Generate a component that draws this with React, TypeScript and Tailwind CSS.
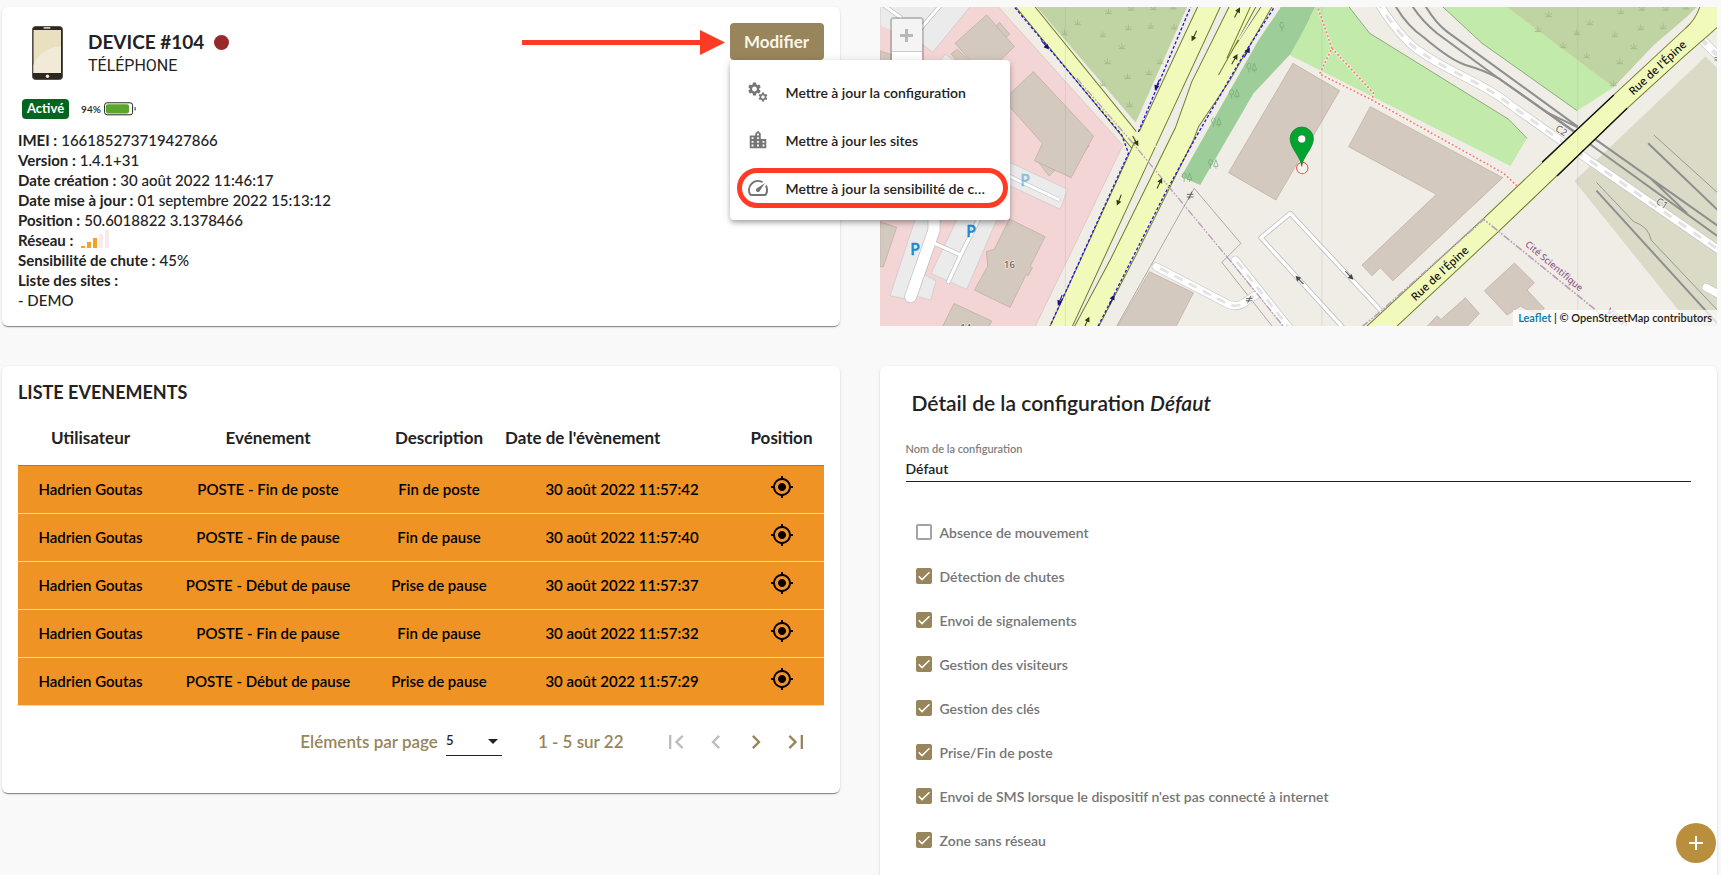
import type { ReactNode } from 'react';
import {
  MdAdd,
  MdChevronLeft,
  MdChevronRight,
  MdFirstPage,
  MdLastPage,
  MdLocationCity,
  MdMyLocation,
  MdSettings,
  MdSpeed,
} from 'react-icons/md';

const events = [
  { user: 'Hadrien Goutas', type: 'POSTE - Fin de poste', description: 'Fin de poste', date: '30 août 2022 11:57:42' },
  { user: 'Hadrien Goutas', type: 'POSTE - Fin de pause', description: 'Fin de pause', date: '30 août 2022 11:57:40' },
  { user: 'Hadrien Goutas', type: 'POSTE - Début de pause', description: 'Prise de pause', date: '30 août 2022 11:57:37' },
  { user: 'Hadrien Goutas', type: 'POSTE - Fin de pause', description: 'Fin de pause', date: '30 août 2022 11:57:32' },
  { user: 'Hadrien Goutas', type: 'POSTE - Début de pause', description: 'Prise de pause', date: '30 août 2022 11:57:29' },
];

const options = [
  { label: 'Absence de mouvement', on: false },
  { label: 'Détection de chutes', on: true },
  { label: 'Envoi de signalements', on: true },
  { label: 'Gestion des visiteurs', on: true },
  { label: 'Gestion des clés', on: true },
  { label: 'Prise/Fin de poste', on: true },
  { label: "Envoi de SMS lorsque le dispositif n'est pas connecté à internet", on: true },
  { label: 'Zone sans réseau', on: true },
];

const cardShadow =
  'shadow-[0_2px_1px_-1px_rgba(0,0,0,0.3),0_1px_1px_rgba(0,0,0,0.16),0_1px_3px_rgba(0,0,0,0.12)]';

function PhoneIcon() {
  return (
    <svg width="31" height="54" viewBox="0 0 31 54" aria-hidden="true">
      <rect x="0.5" y="0.5" width="30" height="53" rx="3" fill="#2d2724" stroke="#55504c" />
      <rect x="1.5" y="4" width="27.5" height="43" fill="#eadfbf" />
      <path d="M29 20.5C18 20.500 5 28 1.500 39V47H29Z" fill="#f1ead6" />
      <rect x="11.500" y="1" width="7" height="1.800" rx="0.900" fill="#cfc6b0" />
      <circle cx="15.500" cy="50.300" r="1.700" fill="#f4ecd8" />
    </svg>
  );
}

function BatteryIcon() {
  return (
    <svg width="32" height="14" viewBox="0 0 32 14" aria-hidden="true">
      <rect x="0.600" y="0.800" width="28" height="12" rx="2.500" fill="#fff" stroke="#222" strokeWidth="1" />
      <rect x="2" y="2.200" width="23" height="9.200" rx="1.800" fill="#5ca52b" />
      <rect x="30.600" y="5.200" width="1" height="3.200" fill="#222" />
    </svg>
  );
}

function SignalIcon() {
  return (
    <svg className="inline-block align-baseline" width="28" height="18" viewBox="0 0 28 18" aria-hidden="true">
      <rect x="0" y="16" width="4" height="2" fill="#f9a02a" />
      <rect x="6" y="12" width="4" height="6" fill="#f9a02a" />
      <rect x="12" y="8" width="4" height="10" fill="#f9a02a" />
      <rect x="18" y="4" width="4" height="14" fill="#f7eaea" />
      <rect x="24" y="0" width="4" height="18" fill="#f7eaea" />
    </svg>
  );
}

function CogsIcon() {
  return (
    <svg width="24" height="24" viewBox="0 0 24 24" aria-hidden="true">
      <MdSettings x="0.500" y="1" size={16} />
      <MdSettings x="11.500" y="11.500" size={11} />
    </svg>
  );
}

function Tuft({ x, y }: { x: number; y: number }) {
  return (
    <path
      d={`M${x - 10} ${y + 7}h20M${x} ${y + 6}v-14M${x - 2} ${y + 6}l-7-9M${x + 2} ${y + 6}l7-9`}
      stroke="#9db37f"
      strokeWidth="2"
      fill="none"
    />
  );
}

function Tree({ x, y }: { x: number; y: number }) {
  return (
    <g stroke="#6fa873" strokeWidth="2" fill="none">
      <ellipse cx={x - 7} cy={y - 5} rx="6" ry="8" />
      <path d={`M${x - 7} ${y + 3}v11M${x + 9} ${y - 13}l-7 20h14ZM${x + 9} ${y + 7}v7`} />
    </g>
  );
}

function Arrow({ x, y, r, c }: { x: number; y: number; r: number; c: string }) {
  return (
    <g transform={`translate(${x} ${y}) rotate(${r})`}>
      <path d="M-17 0H5" stroke={c} strokeWidth="3" />
      <path d="M18 0L2-8V8Z" fill={c} />
    </g>
  );
}

function WhiteRoad({ d, w }: { d: string; w: number }) {
  return (
    <g fill="none" strokeLinecap="round" strokeLinejoin="round">
      <path d={d} stroke="#c6c6c6" strokeWidth={w + 4} />
      <path d={d} stroke="#fff" strokeWidth={w} />
    </g>
  );
}

const tuftsLeft = [
  [715, 34], [783, 24], [850, 22], [910, 20], [622, 67], [583, 97], [698, 103], [775, 82], [842, 78], [912, 80],
  [755, 139], [712, 184], [870, 184], [772, 229], [836, 217], [697, 250], [778, 313],
];
const tuftsRight = [
  [775, 43], [991, 34], [1055, 24], [1126, 24], [1186, 20], [898, 67], [743, 88], [859, 97], [973, 103], [1051, 82],
  [1118, 79], [818, 136], [1030, 139], [889, 166], [988, 184], [969, 250],
];

function MapDrawing() {
  const building = { fill: '#d4c9bf', stroke: '#bda9a0', strokeWidth: 2 };
  const parking = { fill: '#ebebeb', stroke: '#cfc4c4', strokeWidth: 2 };
  const road = { fill: '#f1f9bb', stroke: '#71802a', strokeWidth: 3 };
  return (
    <svg
      className="block h-[319px] w-full"
      viewBox="2640 21 2511 957"
      preserveAspectRatio="xMidYMid slice"
      fontFamily="'Noto Sans', sans-serif"
      role="img"
      aria-label="Position"
    >
      <rect x="2000" y="0" width="4000" height="1100" fill="#f0ede6" />

      <g transform="translate(2610 0)">
        <path d="M-600 0H366L758 436L490 990H-600Z" fill="#f3d5d5" stroke="#d8bcbc" strokeWidth="2" />
        <path d="M30 0H317L188 157L150 128L30 80Z" {...parking} />
        <path d="M30 75L130 128L70 190H30Z" fill="#f3d5d5" />
        <path d="M225 163L245 176V190H205Z" {...parking} />
        <path d="M30 8L95 55M215 12L150 88" stroke="#bbb" strokeWidth="13" />
        <path d="M30 8L95 55M215 12L150 88" stroke="#fff" strokeWidth="9" />
        <path d="M30 153L68 165V190H30Z" {...building} />
        <path d="M388 67L419 103L408 112L375 82Z" {...building} />
        <path d="M262 148L243 162L262 185H300Z" {...building} />
        <path d="M350 45L433 140L388 184H303L255 130Z" {...building} />
        <path d="M638 440L650 430L657 437L645 452Z" {...building} />
        <path d="M505 487L537 528L555 510Z" {...building} />
        <path d="M490 215L670 408L603 533L493 482L517 430L400 300Z" {...building} />
        <path d="M400 478L593 568L570 628L400 548Z" {...parking} />
        <WhiteRoad d="M400 520L565 598" w={9} />
        <path d="M30 665L80 682L40 800H30Z" {...building} />
        <path d="M138 650H215L165 825L198 842L182 900L145 890L122 900L60 887Z" {...parking} />
        <path d="M265 650H384L290 868L183 820Z" {...parking} />
        <g fill="none" strokeLinejoin="round" strokeLinecap="round">
          <path d="M192 640V690L122 890M190 728L272 765M235 845L272 765L325 660" stroke="#bdbdbd" strokeWidth="14" />
          <path d="M192 640V690L122 890" stroke="#bdbdbd" strokeWidth="38" />
          <path d="M192 640V690L122 890" stroke="#fff" strokeWidth="34" />
          <path d="M190 728L272 765M235 845L272 765L325 660" stroke="#fff" strokeWidth="10" />
        </g>
        <path d="M418 657L525 710L480 800L487 803L475 826L468 824L420 922L313 870L353 798L349 755L373 747Z" {...building} />
        <path d="M252 910L365 963L350 990H212Z" {...building} />

        <path d="M482 0H960L797 367L790 360Z" fill="#bfd3a3" />
        {tuftsLeft.map(([x, y]) => (
          <Tuft key={`${x}-${y}`} x={x} y={y} />
        ))}
        <path d="M420 0H478L803 400L785 445Z" {...road} />
        <path d="M992 0L805 400L785 445L530 1000H597L835 485L1060 0Z" {...road} />
        <path d="M1087 0L965 245L915 385L720 780L602 1000H675L800 760L970 420L985 380L1078 243L1217 0Z" {...road} />
        <path d="M800 385L860 440L790 445Z" fill="#f1f9bb" />
        <path d="M1150 0L1075 165L1045 225L1095 143L1186 0Z" fill="#f1f9bb" />
        <path d="M1150 0L1070 175M1186 0L1090 145L1045 225M1168 0L1085 155" stroke="#71802a" strokeWidth="3" fill="none" />
        <path d="M1173 10L1105 120" stroke="#eee" strokeWidth="5" />
        <g fill="none" stroke="#2616dd" strokeWidth="4" strokeDasharray="9 6">
          <path d="M415 0L755 405L775 460L532 995" />
          <path d="M970 0L803 400" />
          <path d="M1226 0L1120 165L975 415L885 580L678 990" />
        </g>
        <path d="M1247 0H1320V110L1258 165L1150 280L990 555L933 530L1165 120Z" fill="#9dcd98" />
        {[[1242, 80], [1143, 203], [1091, 282], [1037, 367], [1028, 492], [949, 532]].map(([x, y]) => (
          <Tree key={x} x={x} y={y} />
        ))}
        <path d="M620 235L780 420L1070 770" fill="none" stroke="#b99fb9" strokeWidth="4" strokeDasharray="22 5 5 5 5 5" />
        <path d="M972 565L1112 730L1055 787L1215 990M972 565L740 978" fill="none" stroke="#8a8a8a" strokeWidth="2" />
        <path d="M838 815L970 878L912 990H736Z" {...building} />
        <g fill="none" strokeLinecap="round" strokeLinejoin="round">
          <path d="M858 800L1060 905Q1090 925 1115 912L1160 882M1095 780L1270 1000" stroke="#c6c6c6" strokeWidth="26" />
          <path d="M858 800L1060 905Q1090 925 1115 912L1160 882M1095 780L1270 1000" stroke="#fff" strokeWidth="22" />
        </g>
        <path d="M870 805L1060 905Q1090 925 1115 912L1160 882M1100 785L1270 1000" fill="none" stroke="#e3e3e3" strokeWidth="8" strokeDasharray="28 20" />
        <path d="M1070 770L1245 985" fill="none" stroke="#b99fb9" strokeWidth="4" strokeDasharray="22 5 5 5 5 5" />
        <path d="M950 583H970M950 591H970M965 575L955 599M1127 895H1147M1127 902H1147M1142 887L1132 910" stroke="#333" strokeWidth="2" />

        <Arrow x={972} y={108} r={115} c="#353a10" />
        <Arrow x={1101} y={38} r={-62} c="#353a10" />
        <Arrow x={1093} y={178} r={-60} c="#353a10" />
        <Arrow x={796} y={423} r={60} c="#353a10" />
        <Arrow x={868} y={550} r={-65} c="#353a10" />
        <Arrow x={747} y={600} r={112} c="#353a10" />
        <Arrow x={650} y={966} r={-65} c="#353a10" />
        <Arrow x={525} y={135} r={50} c="#190f83" />
        <Arrow x={861} y={255} r={112} c="#190f83" />
        <Arrow x={1130} y={158} r={-60} c="#190f83" />
        <Arrow x={570} y={900} r={112} c="#190f83" />
        <Arrow x={725} y={900} r={-65} c="#190f83" />
        <g fill="#168bd2" stroke="#168bd2" strokeWidth="1.5" fontSize="48" textAnchor="middle">
          <text x="135" y="764">P</text>
          <text x="303" y="712">P</text>
          <text x="465" y="557" opacity="0.45">P</text>
        </g>
        <g fill="#666" fontSize="28" textAnchor="middle" stroke="#e9e1da" strokeWidth="5" paintOrder="stroke">
          <text x="418" y="804">16</text>
          <text x="287" y="993">14</text>
        </g>
        <path d="M586 0V1000" stroke="#999" strokeOpacity="0.2" strokeWidth="3" />
      </g>

      <g transform="translate(3870 0)">
        <path d="M-2 165L30 110L86 0H160L238 100L655 358L710 415L660 498Z" fill="#c2ebab" />
        <path d="M160 0L238 100L655 358L710 415" fill="none" stroke="#6d8a62" strokeWidth="2" />
        <path d="M-30 21H75L-2 165Z" fill="#9dcd98" />
        <path d="M435 0H655L970 262L860 332L575 130Z" fill="#c2ebab" />
        <path d="M435 0L575 130L860 332" fill="none" stroke="#6d8a62" strokeWidth="2" />
        <path d="M622 0H1240L1190 50L1090 135L970 262Z" fill="#bfd3a3" />
        {tuftsRight.map(([x, y]) => (
          <Tuft key={`${x}-${y}`} x={x} y={y} />
        ))}
        <path d="M852 543L1245 170L1281 205L1700 600V1000H1220Z" fill="#dadac7" />

        <g fill="none" stroke="#8f8f8f" strokeWidth="6">
          <path d="M305 0Q345 75 400 112Q480 180 525 195Q580 210 625 235L860 400" />
          <path d="M355 0Q385 55 440 100L620 232L850 395" />
          <path d="M395 0Q430 65 470 95L862 380M765 335L862 382" />
          <path d="M915 418L1300 690M898 432L1300 722M1080 535L1190 640" />
          <path d="M1073 430L1300 648M918 572L1290 980" />
        </g>
        <path d="M1090 405L1300 595M918 547L1030 665Q1075 680 1082 720L1290 940" fill="none" stroke="#777" strokeWidth="2" />
        <WhiteRoad d="M258 0Q320 100 375 145Q430 185 520 230Q620 280 660 315L820 428L1300 760" w={22} />
        <path d="M258 0Q320 100 375 145Q430 185 520 230Q620 280 660 315L820 428L1300 760" fill="none" stroke="#e3e3e3" strokeWidth="9" strokeDasharray="28 26" />
        <WhiteRoad d="M1235 120L1300 185" w={24} />
        <path d="M1235 120L1300 185" stroke="#e3e3e3" strokeWidth="14" strokeDasharray="20 24" />
        <WhiteRoad d="M1247 862L1300 890" w={22} />
        <path d="M1272 173H1290M1272 180H1290" stroke="#333" strokeWidth="2" />

        <path d="M8 190L148 272L-43 600L-185 518Z" {...building} />
        <path d="M240 320L637 533L308 842L270 803L245 827L215 795L438 583L175 440Z" {...building} />
        <path d="M672 789L732 848L710 870L762 925L740 945L690 918L650 945L582 872Z" {...building} />
        <path d="M525 893L567 940L520 990H400L440 947L452 958Z" {...building} />
        <g fill="none" strokeLinejoin="round">
          <path d="M165 990L-88 713L0 640L275 935" stroke="#bfbfbf" strokeWidth="15" />
          <path d="M165 990L-88 713L0 640L275 935" stroke="#fff" strokeWidth="10" />
        </g>
        <Arrow x={28} y={840} r={227} c="#444" />
        <Arrow x={177} y={826} r={47} c="#444" />

        <path
          d="M1238 0L1228 21Q1215 60 1185 85L970 285L580 655L230 978L215 995H302L640 680L1010 325L1180 170L1300 65V0Z"
          {...road}
        />
        <path d="M755 487L970 285M800 528L1010 325" stroke="#111" strokeWidth="4" />
        <path d="M215 980L270 935L580 658L910 925L980 990" fill="none" stroke="#b99fb9" strokeWidth="5" strokeDasharray="22 5 5 5 5 5" />
        <g fill="none" stroke="#fff" strokeOpacity="0.5" strokeWidth="8">
          <path d="M85 30L125 145L88 222L245 300L640 520L680 558M125 145L250 280L245 300" />
        </g>
        <path
          d="M80 15L125 145L88 222L245 300L640 520L680 558M125 145L250 280L245 300"
          fill="none"
          stroke="#fa8072"
          strokeWidth="5"
          strokeDasharray="6 6"
        />
        <g textAnchor="middle" fontSize="33">
          <text transform="translate(1109 212) rotate(-43)" fill="#111">Rue de l'Épine</text>
          <text transform="translate(456 829) rotate(-43)" fill="#111">Rue de l'Épine</text>
          <g fontSize="28" fill="#8d618b" stroke="#f3efec" strokeWidth="4" paintOrder="stroke">
            <text transform="translate(785 805) rotate(40)">Cité Scientifique</text>
            <text transform="translate(975 960) rotate(40)">Villen</text>
          </g>
          <g fontSize="29" fill="#777" stroke="#f5f5f2" strokeWidth="4" paintOrder="stroke">
            <text transform="translate(807 400) rotate(34)">C2</text>
            <text transform="translate(1109 618) rotate(34)">C1</text>
          </g>
        </g>
        <path d="M95 0V1000M862 0V1000" stroke="#999" strokeOpacity="0.2" strokeWidth="3" />
        <circle cx="36" cy="504" r="17" fill="#fff" fillOpacity="0.3" stroke="#f04848" strokeWidth="3" />
        <path
          d="M34.500 499C32 470 -0.500 445 -0.500 416A35 35 0 0 1 69.500 416C69.500 445 37 470 34.500 499Z"
          fill="#02a32f"
          stroke="#04832a"
          strokeWidth="2"
        />
        <circle cx="34.500" cy="417" r="12" fill="#fff" stroke="#04832a" strokeWidth="2" />
      </g>
    </svg>
  );
}

function MenuItem({ icon, children, highlighted }: { icon: ReactNode; children: ReactNode; highlighted?: boolean }) {
  return (
    <li role="none" className="relative">
      <button type="button" role="menuitem" className="flex h-12 w-full items-center gap-4 pr-5 pl-4 text-left">
        <span className="flex w-6 shrink-0 justify-center text-[#757575]">{icon}</span>
        <span className="truncate">{children}</span>
      </button>
      {highlighted && (
        <span className="pointer-events-none absolute inset-y-1 right-0.5 left-[7px] rounded-full border-[5px] border-[#ff3b25]" />
      )}
    </li>
  );
}

function Info({ label, children }: { label: string; children?: ReactNode }) {
  return (
    <div className="flex gap-1">
      <dt className="font-bold">{label} :</dt>
      <dd>{children}</dd>
    </div>
  );
}

function DeviceCard() {
  return (
    <section className={`rounded-md bg-white p-4 ${cardShadow}`}>
      <div className="flex items-start justify-between">
        <div className="flex h-[68px] gap-[25px] pt-[3px] pl-3.5">
          <PhoneIcon />
          <div className="pt-1">
            <h1 className="flex items-center gap-2.5 text-[19px] leading-6 font-bold">
              DEVICE #104 <span className="size-[15px] rounded-full bg-[#97282b]" />
            </h1>
            <p className="font-[Roboto,sans-serif] text-base leading-6 font-normal">TÉLÉPHONE</p>
          </div>
        </div>
        <div className="relative z-10">
          <svg
            className="pointer-events-none absolute top-[7px] right-full mr-[5px]"
            width="203"
            height="25"
            viewBox="0 0 203 25"
            aria-hidden="true"
          >
            <path d="M0 10H178V0L203 12.500L178 25V15H0Z" fill="#ff3b25" />
          </svg>
          <button
            type="button"
            aria-haspopup="menu"
            aria-expanded="true"
            className="block h-[37px] w-[94px] rounded bg-[#98855b] text-center text-[17px] font-bold text-[#faf6ea]"
          >
            Modifier
          </button>
          <ul
            role="menu"
            className="absolute top-full left-0 w-[280px] rounded bg-white py-2 text-[14px] font-semibold shadow-[0_2px_4px_-1px_rgba(0,0,0,0.2),0_4px_5px_rgba(0,0,0,0.14),0_1px_10px_rgba(0,0,0,0.12)]"
          >
            <MenuItem icon={<CogsIcon />}>Mettre à jour la configuration</MenuItem>
            <MenuItem icon={<MdLocationCity size={22} />}>Mettre à jour les sites</MenuItem>
            <MenuItem icon={<MdSpeed size={24} />} highlighted>
              Mettre à jour la sensibilité de chute
            </MenuItem>
          </ul>
        </div>
      </div>
      <div className="flex h-[39px] items-start gap-3 pl-1">
        <span className="mt-2 flex h-5 items-center rounded bg-[#04651f] px-[5px] text-[13px] font-bold text-white">Activé</span>
        <span className="mt-2 flex h-5 items-center gap-[3px] text-[10px] font-semibold">
          94%
          <BatteryIcon />
        </span>
      </div>
      <dl className="text-[15px] leading-5">
        <Info label="IMEI">166185273719427866</Info>
        <Info label="Version">1.4.1+31</Info>
        <Info label="Date création">30 août 2022 11:46:17</Info>
        <Info label="Date mise à jour">01 septembre 2022 15:13:12</Info>
        <Info label="Position">50.6018822 3.1378466</Info>
        <div className="flex h-5 items-end gap-2">
          <dt className="font-bold">Réseau :</dt>
          <dd className="flex h-5">
            <SignalIcon />
          </dd>
        </div>
        <Info label="Sensibilité de chute">45%</Info>
        <Info label="Liste des sites" />
        <div>- DEMO</div>
      </dl>
    </section>
  );
}

function MapCard() {
  return (
    <section className="relative overflow-hidden">
      <MapDrawing />
      <div className="absolute top-2.5 left-2.5 overflow-hidden rounded border-2 border-black/20">
        <button
          type="button"
          aria-label="Zoom avant"
          className="flex h-[33px] w-[30px] items-center justify-center border-b border-[#ccc] bg-[#f4f4f4]"
        >
          <svg width="13" height="13" viewBox="0 0 13 13" aria-hidden="true">
            <path d="M6.500 0V13M0 6.500H13" stroke="#b8b8b8" strokeWidth="3" />
          </svg>
        </button>
        <button type="button" aria-label="Zoom arrière" className="block h-[30px] w-[30px] bg-white" />
      </div>
      <p className="absolute right-0 bottom-0 bg-white/70 px-[5px] text-[11px] leading-4 font-semibold">
        <a href="#leaflet" className="text-[#0078a8]">
          Leaflet
        </a>{' '}
        | © OpenStreetMap contributors
      </p>
    </section>
  );
}

function EventsCard() {
  const pager = 'flex size-10 items-center justify-center';
  return (
    <section className={`self-start rounded-md bg-white px-4 pt-4 pb-[15px] ${cardShadow}`}>
      <h2 className="mb-2 text-[18px] leading-5 font-bold">LISTE EVENEMENTS</h2>
      <table className="w-full table-fixed border-collapse text-center text-[15px] font-semibold">
        <colgroup>
          <col className="w-[145px]" />
          <col className="w-[210px]" />
          <col className="w-[132px]" />
          <col className="w-[234px]" />
          <col className="w-[85px]" />
        </colgroup>
        <thead>
          <tr className="h-[55px] border-b border-[#85836f] text-[17px]">
            <th className="font-bold">Utilisateur</th>
            <th className="font-bold">Evénement</th>
            <th className="font-bold">Description</th>
            <th className="text-left font-bold">Date de l'évènement</th>
            <th className="font-bold">Position</th>
          </tr>
        </thead>
        <tbody>
          {events.map((event) => (
            <tr key={event.date} className="h-12 border-b border-[#e3d9c8] bg-[#ef9325] text-black">
              <td>{event.user}</td>
              <td>{event.type}</td>
              <td>{event.description}</td>
              <td>{event.date}</td>
              <td>
                <button type="button" aria-label="Localiser" className="mb-1 block w-full">
                  <MdMyLocation size={24} className="mx-auto" />
                </button>
              </td>
            </tr>
          ))}
        </tbody>
      </table>
      <div className="flex h-[72px] items-center justify-end pr-2 text-[17px] font-semibold text-[#98855b]">
        <label htmlFor="page-size" className="mr-2">
          Eléments par page
        </label>
        <span className="grid w-14 items-center border-b border-[#222]">
          <select
            id="page-size"
            defaultValue="5"
            className="col-start-1 row-start-1 h-7 w-full appearance-none bg-transparent text-[13px] text-[#222] outline-none"
          >
            <option>5</option>
            <option>10</option>
          </select>
          <svg
            className="pointer-events-none col-start-1 row-start-1 mr-1 justify-self-end"
            width="10"
            height="5"
            viewBox="0 0 10 5"
            aria-hidden="true"
          >
            <path d="M0 0H10L5 5Z" fill="#222" />
          </svg>
        </span>
        <span className="mr-8 ml-9">1 - 5 sur 22</span>
        <button type="button" aria-label="Première page" disabled className={`${pager} text-[#bdbdbd]`}>
          <MdFirstPage size={28} />
        </button>
        <button type="button" aria-label="Page précédente" disabled className={`${pager} text-[#bdbdbd]`}>
          <MdChevronLeft size={28} />
        </button>
        <button type="button" aria-label="Page suivante" className={pager}>
          <MdChevronRight size={28} />
        </button>
        <button type="button" aria-label="Dernière page" className={pager}>
          <MdLastPage size={28} />
        </button>
      </div>
    </section>
  );
}

function ConfigCard() {
  return (
    <section className={`rounded-t-md bg-white px-[26px] pt-[22px] ${cardShadow}`}>
      <h2 className="pl-1.5 text-[21px] leading-[30px] font-semibold">
        Détail de la configuration <em>Défaut</em>
      </h2>
      <label htmlFor="config-name" className="mt-[23px] block text-[11px] leading-4 font-semibold text-[#808080]">
        Nom de la configuration
      </label>
      <input
        id="config-name"
        defaultValue="Défaut"
        className="block h-[25px] w-full border-b border-[#222] bg-transparent pb-0.5 text-[14px] font-semibold outline-none"
      />
      <ul className="mt-7 pl-2.5">
        {options.map(({ label, on }) => (
          <li key={label} className="flex h-11 items-center">
            <label className="flex items-center gap-2 text-[14px] font-semibold text-[#757575]">
              <span className="grid size-4 place-items-center">
                <input
                  type="checkbox"
                  defaultChecked={on}
                  className="peer col-start-1 row-start-1 size-4 appearance-none rounded-xs border-2 border-[#a3a3a3] checked:border-[#98855b] checked:bg-[#98855b]"
                />
                <svg
                  className="pointer-events-none invisible col-start-1 row-start-1 peer-checked:visible"
                  width="16"
                  height="16"
                  viewBox="0 0 16 16"
                  aria-hidden="true"
                >
                  <path d="M2.800 8.300L6 11.600L13.500 4.200" fill="none" stroke="#fff" strokeWidth="1.500" />
                </svg>
              </span>
              {label}
            </label>
          </li>
        ))}
      </ul>
    </section>
  );
}

export default function App() {
  return (
    <main className="grid min-h-screen grid-cols-2 grid-rows-[auto_1fr] gap-10 bg-[#f9f9f9] pt-[7px] pr-1 pl-0.5 font-[Lato,sans-serif] font-medium text-[#222]">
      <DeviceCard />
      <MapCard />
      <EventsCard />
      <ConfigCard />
      <button
        type="button"
        aria-label="Ajouter"
        className="fixed right-[5px] bottom-3 flex size-10 items-center justify-center rounded-full bg-[#b98f3d] text-white"
      >
        <MdAdd size={24} />
      </button>
    </main>
  );
}
